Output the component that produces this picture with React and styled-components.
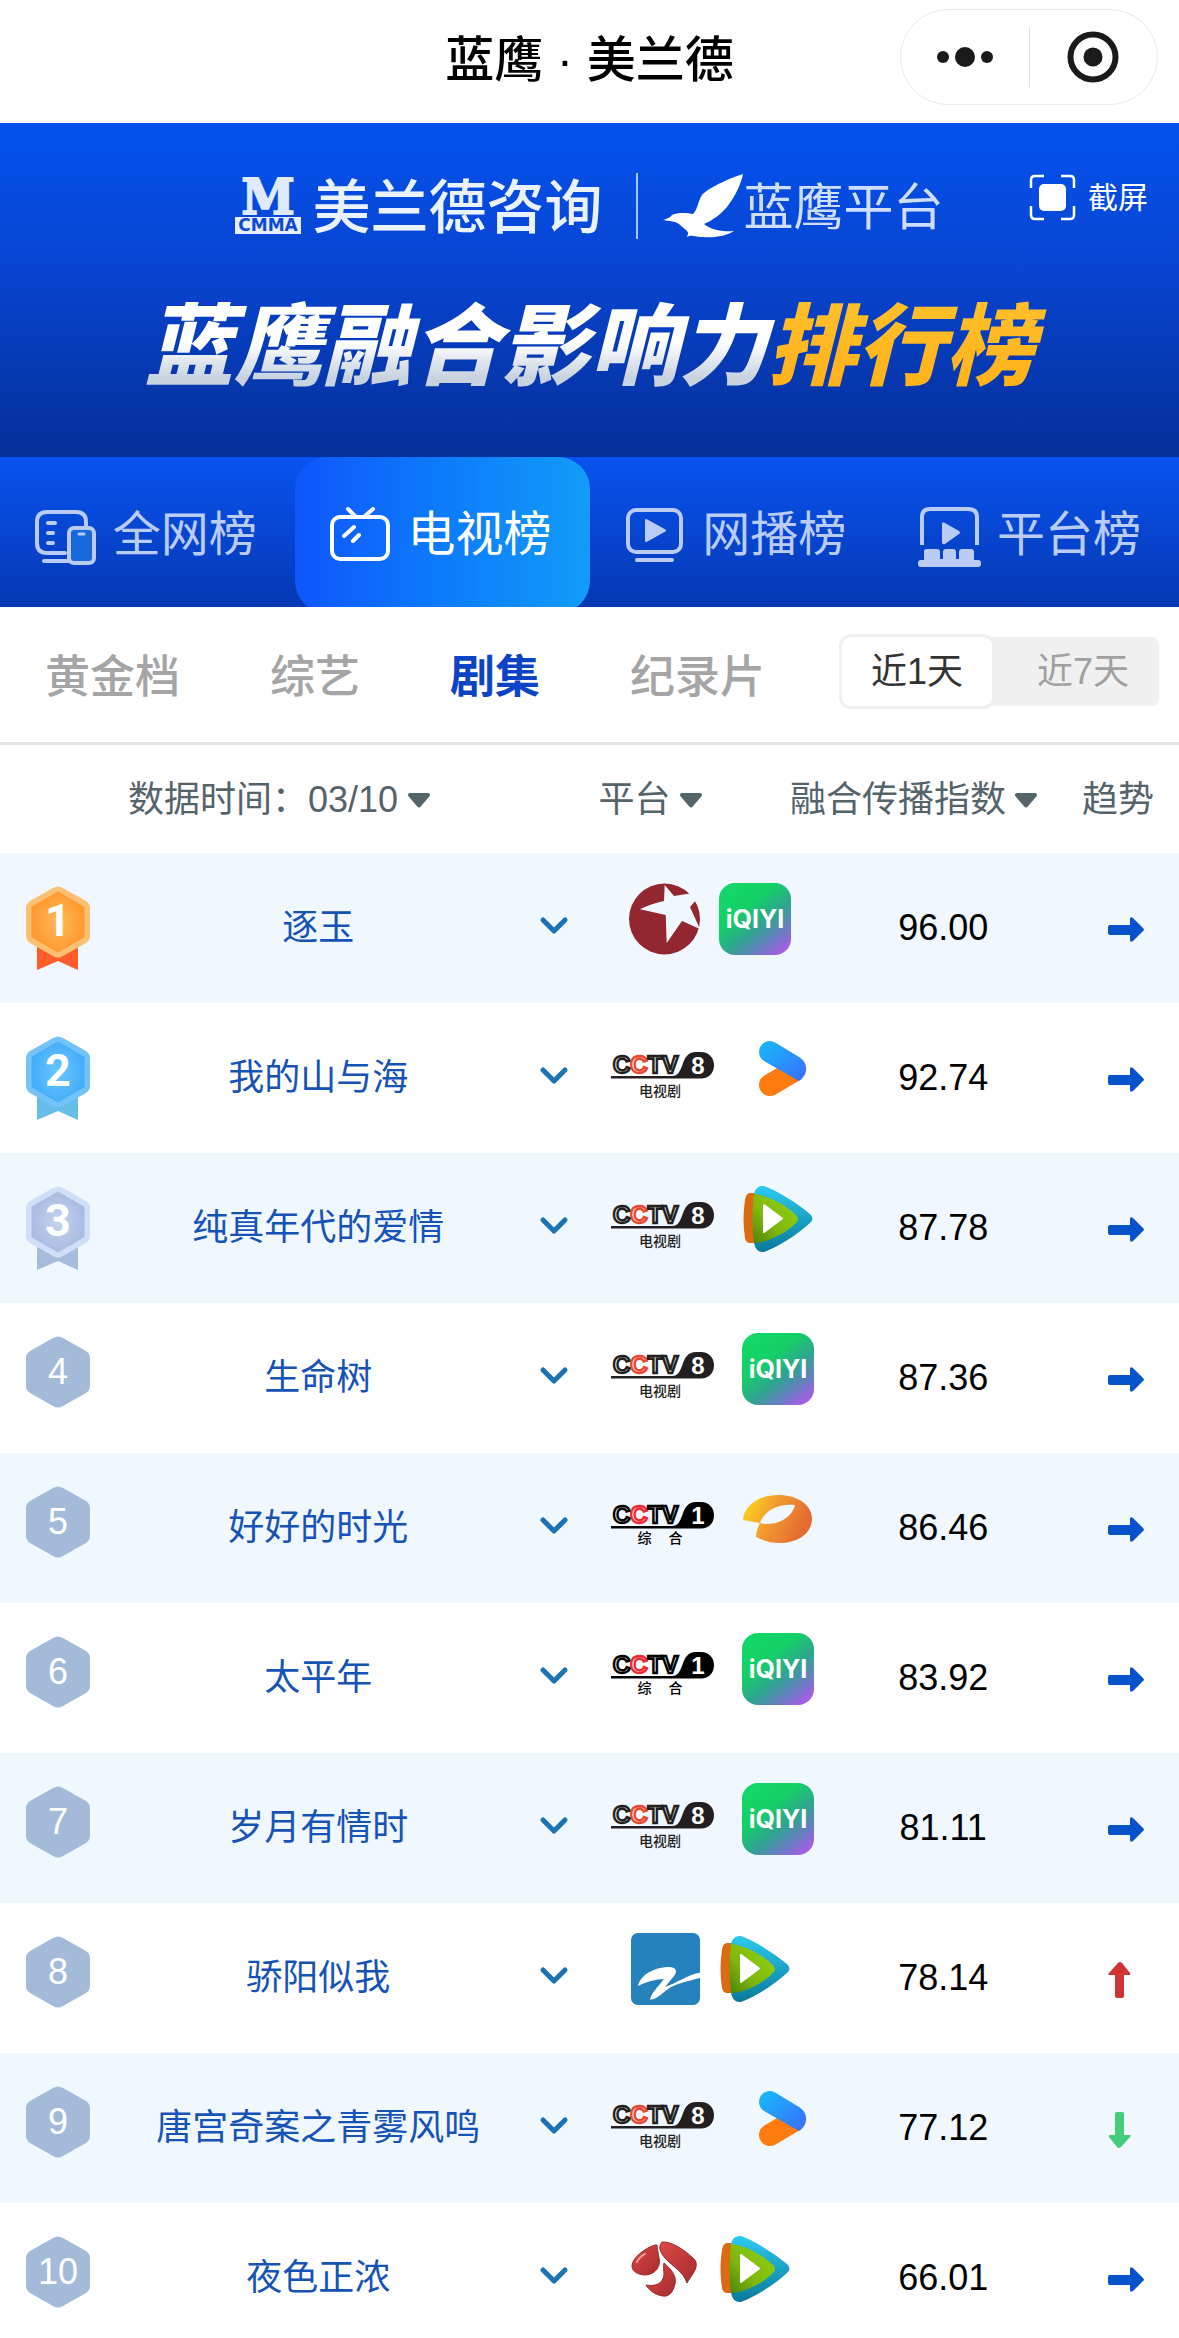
import React, {useState} from 'react';
import styled, {createGlobalStyle, css} from 'styled-components';

const GlobalStyle = createGlobalStyle`
    *{
        box-sizing:border-box;
    }
    body{
        margin:0;
        background-color:#fff;
        font-family:'Liberation Sans', 'Noto Sans CJK SC', sans-serif;
    }
    button, select{
        margin:0;
        padding:0;
        border:0;
        background:none;
        color:inherit;
        font:inherit;
        cursor:pointer;
    }
    svg{
        display:block;
        flex:none;
        overflow:visible;
    }
`;

const Page = styled.main`
    height:100vh;
    overflow-x:hidden;
    overflow-y:auto;
    scrollbar-width:none;
`;

const Header = styled.header`
    display:grid;
    grid-template-columns:1fr auto 1fr;
    align-items:center;
    padding:9px 21px 18px;
`;

const AppName = styled.h1`
    grid-column:2;
    margin:0;
    padding-top:6px;
    font-size:49px;
    line-height:64px;
    font-weight:500;
    color:#000;
`;

const Capsule = styled.div`
    justify-self:end;
    display:flex;
    align-items:center;
    width:258px;
    height:96px;
    border:1px solid #e9e9e9;
    border-radius:48px;
`;

const CapsuleButton = styled.button`
    flex:1;
    height:60px;
    display:flex;
    align-items:center;
    justify-content:center;
    & + &{
        border-left:1px solid #e2e2e2;
    }
`;

const Banner = styled.section`
    padding:48px 31px 60px;
    background:linear-gradient(#0552ef, #0744cf 45%, #052f98);
    color:#fff;
`;

const BrandRow = styled.div`
    display:grid;
    grid-template-columns:1fr auto 1fr;
`;

const Brands = styled.div`
    grid-column:2;
    height:70px;
    display:flex;
    align-items:center;
`;

const CompanyName = styled.span`
    margin-left:11px;
    padding-top:4px;
    font-size:58px;
    line-height:66px;
    font-weight:500;
    color:#eaf1ff;
`;

const BrandLine = styled.span`
    width:2px;
    height:66px;
    margin:0 25px 0 33px;
    background-color:#a9c2fa;
`;

const ProductName = styled.span`
    padding-top:4px;
    font-size:50px;
    line-height:66px;
    font-weight:400;
    color:#cfdefe;
`;

const ShotButton = styled.button`
    justify-self:end;
    align-self:start;
    display:flex;
    align-items:center;
    gap:13px;
    margin-top:4px;
    font-size:30px;
    line-height:45px;
`;

const BannerTitle = styled.h2`
    margin:56px 0 0;
    text-align:center;
    font-size:89px;
    line-height:100px;
    font-weight:900;
    font-style:italic;
    white-space:nowrap;
`;

const TitlePart = styled.span`
    padding:0 16px;
    margin:0 -16px;
    color:transparent;
    background:${props=>props.$gold
        ?'linear-gradient(#ffc02b, #ffb019)'
        :'linear-gradient(#fff 45%, #c9d3e0 80%)'};
    background-clip:text;
    -webkit-background-clip:text;
`;

const MainTabs = styled.nav`
    display:grid;
    grid-template-columns:repeat(4, 1fr);
    height:150px;
    overflow:hidden;
    background:linear-gradient(#0853f0, #0538b2);
`;

const MainTab = styled.button`
    height:156px;
    padding-bottom:6px;
    display:flex;
    align-items:center;
    justify-content:center;
    gap:17px;
    border-radius:32px;
    font-size:48px;
    line-height:60px;
    color:#b9cbf6;
    ${props=>props.$active&&css`
        color:#fff;
        background:linear-gradient(90deg, #0f56fb, #0d7bfb 50%, #129cf8);
    `}
`;

const TabLabel = styled.span`
    padding-top:6px;
    margin-right:2px;
`;

const SubBar = styled.div`
    display:flex;
    justify-content:space-between;
    align-items:center;
    height:138px;
    padding:0 20px 0 45px;
    border-bottom:3px solid #e3e3e3;
`;

const SubTabs = styled.div`
    display:flex;
    gap:90px;
    padding-top:6px;
`;

const SubTab = styled.button`
    font-size:45px;
    line-height:60px;
    font-weight:${props=>props.$active?700:500};
    color:${props=>props.$active?'#0b45c6':'#a5a5a5'};
`;

const RangeGroup = styled.div`
    display:flex;
    align-items:center;
    margin-bottom:6px;
    border-radius:12px;
    background:linear-gradient(#f0f0f0, #f0f0f0) center / 100% 69px no-repeat;
`;

const RangeButton = styled.button`
    width:164px;
    height:75px;
    padding-left:12px;
    border-radius:12px;
    font-size:36px;
    line-height:48px;
    color:#a0a0a0;
    ${props=>props.$active&&css`
        width:156px;
        padding-left:0;
        color:#333;
        background-color:#fff;
        border:3px solid #f0f0f0;
    `}
`;

const RankTable = styled.table`
    width:100%;
    table-layout:fixed;
    border-collapse:collapse;
    font-size:36px;
    line-height:48px;
`;

const HeadCell = styled.th`
    height:108px;
    padding:2px ${props=>props.$right||0}px 0 ${props=>props.$left||0}px;
    text-align:left;
    font-weight:400;
    white-space:nowrap;
    color:#55636b;
`;

const HeadItem = styled.div`
    display:flex;
    align-items:center;
    justify-content:${props=>props.$end?'flex-end':'flex-start'};
`;

const HeadSelect = styled.select`
    appearance:none;
    outline:none;
`;

const SortButton = styled.button`
    display:flex;
    align-items:center;
`;

const CaretIcon = styled.svg`
    margin-left:8px;
`;

const Row = styled.tr`
    height:150px;
    background-color:${props=>props.$striped?'#f0f7ff':'#fff'};
`;

const Cell = styled.td`
    padding:0;
    text-align:center;
    vertical-align:middle;
`;

const MedalCell = styled(Cell)`
    padding:33px 0 0 25px;
    vertical-align:top;
`;

const NameLink = styled.a`
    color:#1653b6;
    text-decoration:none;
    white-space:nowrap;
`;

const ExpandButton = styled.button`
    display:flex;
    align-items:center;
    justify-content:center;
    width:100%;
    height:60px;
    padding-bottom:4px;
`;

const PlatformList = styled.div`
    display:flex;
    justify-content:center;
    gap:18px;
    padding:0 0 18px 6px;
`;

const TrendCell = styled(Cell)`
    padding:4px 0 0 47px;
`;

/* ---- icons ---- */

const Caret = ()=>(
    <CaretIcon width="24" height="15" viewBox="0 0 24 15">
        <path d="M3 2H21L12 12.500Z" fill="#55636b" stroke="#55636b" strokeWidth="4" strokeLinejoin="round"/>
    </CaretIcon>
);

const Chevron = ()=>(
    <svg width="28" height="18" viewBox="0 0 28 18">
        <path d="M3 3L14 14L25 3" fill="none" stroke="#1a74b4" strokeWidth="5" strokeLinecap="round" strokeLinejoin="round"/>
    </svg>
);

const ScreenShotIcon = ()=>(
    <svg width="45" height="45" viewBox="0 0 45 45">
        <path d="M14 1H5Q1 1 1 5V13M31 1H40Q44 1 44 5V13M44 31V40Q44 44 40 44H31M14 44H5Q1 44 1 40V31" fill="none" stroke="#fff" strokeWidth="2.500"/>
        <rect x="9" y="9" width="27" height="27" rx="5" fill="#fff"/>
    </svg>
);

const CompanyMark = ()=>(
    <svg width="66" height="56" viewBox="0 0 66 56">
        <text x="33" y="36" textAnchor="middle" fontFamily="DejaVu Serif" fontWeight="700" fontSize="48" fill="#dfe9ff" stroke="#dfe9ff" strokeWidth="2">M</text>
        <rect y="39" width="66" height="17" fill="#e6eeff"/>
        <text x="33" y="53" textAnchor="middle" fontFamily="DejaVu Sans" fontWeight="700" fontSize="17" fill="#0a4ad6">CMMA</text>
    </svg>
);

const EagleMark = ()=>(
    <svg width="81" height="64" viewBox="0 0 81 64">
        <path d="M80 0C70 3 46 13 39 21C35 27 35 35 30 40C25 39 15 38 9 41C7 44 3 45 0 46C5 47 12 47 16 50C20 54 26 57 25 60L24 63C28 60 33 63 40 63C52 64 63 62 71 57C60 58 48 56 41 50C50 46 58 40 64 33C72 23 78 10 80 0Z" fill="#fff"/>
    </svg>
);

const AllNetIcon = ()=>(
    <svg width="60" height="66" viewBox="0 0 60 66" fill="none" stroke="currentColor" strokeWidth="4" strokeLinecap="round">
        <path d="M29 54H11Q1 54 1 44V23Q1 13 11 13H40Q50 13 50 23V27"/>
        <path d="M12 24H19M12 34H17M12 44H17M8 62H32"/>
        <rect x="33" y="29" width="25" height="35" rx="5" fill="#1768dc"/>
        <path d="M43 35H48" strokeWidth="3"/>
    </svg>
);

const TvIcon = ()=>(
    <svg width="60" height="66" viewBox="0 0 60 66" fill="none" stroke="currentColor" strokeWidth="4" strokeLinecap="round">
        <rect x="1" y="18" width="56" height="42" rx="8"/>
        <path d="M17 10L24 17M42 10L34 17M13 37L23 28M22 42L28 36"/>
    </svg>
);

const WebPlayIcon = ()=>(
    <svg width="60" height="66" viewBox="0 0 60 66" fill="none" stroke="currentColor" strokeWidth="4" strokeLinecap="round">
        <rect x="3" y="11" width="53" height="42" rx="8"/>
        <path d="M21 21V42L40 31.500Z" fill="currentColor" strokeWidth="2" strokeLinejoin="round"/>
        <path d="M12 61H47"/>
    </svg>
);

const PlatformIcon = ()=>(
    <svg width="60" height="66" viewBox="0 0 60 66" fill="currentColor">
        <path d="M2 46V18Q2 10 10 10H48Q57 10 57 18V46" fill="none" stroke="currentColor" strokeWidth="4"/>
        <path d="M22 25Q22 22 25 24L39 32Q41 34 39 35L25 45Q22 46 22 43Z"/>
        <path d="M4 62V52Q4 50 7 50H17Q20 50 20 53V60H23V53Q23 50 26 50H33Q36 50 36 53V60H39V53Q39 50 42 50H51Q54 50 54 53V62Z"/>
        <rect x="-2" y="61" width="63" height="7" rx="3"/>
    </svg>
);

/* ---- rank badges ---- */

const hexagon = "M28 2Q33 -1 38 2L61 15Q65 18 65 22V50Q65 54 61 57L38 70Q33 73 28 70L5 57Q1 54 1 50V22Q1 18 5 15Z";

const medals = {
    1:{edge:'#fcc072', from:'#ffb95c', to:'#ff9a2e', ribbon:'#ff5c29'},
    2:{edge:'#74c2fa', from:'#6bc6ff', to:'#45aef9', ribbon:'#66bde9'},
    3:{edge:'#cfdff8', from:'#c5d2ee', to:'#a9bde2', ribbon:'#a5bcdc'},
};

function Medal({rank}){
    const medal = medals[rank];
    if(!medal){
        return(
            <svg width="66" height="72" viewBox="0 0 66 72">
                <path d={hexagon} fill="#a3bbd9"/>
                <text x="33" y="48" textAnchor="middle" fontSize="36" fill="#fff">{rank}</text>
            </svg>
        );
    }
    return(
        <svg width="66" height="84" viewBox="0 0 66 84">
            <defs>
                <radialGradient id={"medal"+rank}>
                    <stop offset="0" stopColor={medal.from}/>
                    <stop offset="1" stopColor={medal.to}/>
                </radialGradient>
            </defs>
            <path d="M12 54H53V84L33 75L12 84Z" fill={medal.ribbon}/>
            <path d={hexagon} fill={medal.edge}/>
            <path d="M33 6L59 21V51L33 66L7 51V21Z" fill={"url(#medal"+rank+")"} stroke={medal.to} strokeWidth="1" strokeLinejoin="round"/>
            <text x="33" y="50" textAnchor="middle" fontFamily="Roboto" fontWeight="700" fontSize="45" fill="#fff">{rank}</text>
        </svg>
    );
}

/* ---- platform logos ---- */

const Iqiyi = ()=>(
    <svg width="72" height="72" viewBox="0 0 72 72" role="img" aria-label="爱奇艺">
        <defs>
            <linearGradient id="iqiyi" x1="0.2" y1="0" x2="1" y2="1">
                <stop offset="0" stopColor="#12d866"/>
                <stop offset="0.3" stopColor="#14cf66"/>
                <stop offset="0.55" stopColor="#2fa491"/>
                <stop offset="0.75" stopColor="#6a7cc4"/>
                <stop offset="1" stopColor="#c94bf4"/>
            </linearGradient>
        </defs>
        <rect width="72" height="72" rx="16" fill="url(#iqiyi)"/>
        <text x="36" y="45" textAnchor="middle" fontFamily="Inter" fontWeight="700" fontSize="25" fill="#fff">iQIYI</text>
    </svg>
);

const Dragon = ()=>(
    <svg width="72" height="72" viewBox="0 0 72 72" role="img" aria-label="东方卫视">
        <circle cx="35.500" cy="36" r="35.500" fill="#92272f"/>
        <path d="M35.700 2L45 13L61 10.500L67 17L61 24L71 46L53 38L37.700 60L36.700 32L11 26.300C19 22 27 20 35 18Z" fill="#f0f7ff"/>
    </svg>
);

// channel number and caption sit beside / under the shared CCTV mark
function Cctv({number, caption, color, red, captionGap, captionY}){
    return(
        <svg width="118" height="72" viewBox="0 0 118 72" role="img" aria-label={"CCTV-"+number}>
            <text x="7" y="40" fontSize="24" fontWeight="700" fill="#fff" strokeWidth="2.400">
                <tspan stroke={color}>C</tspan>
                <tspan stroke={red}>C</tspan>
                <tspan stroke={color}>TV</tspan>
            </text>
            <path d="M5 43H66C72 43 74 38 76 33C79 24 82 19 90 19H95C103 19 108 25 108 32C108 40 103 45.500 95 45.500H5Z" fill={color}/>
            <text x="92" y="41" textAnchor="middle" fontSize="24" fontWeight="700" fill="#fff">{number}</text>
            <text y={captionY} textAnchor="middle" fontSize="14" fontWeight="500" fill={color}>
                {caption.split('').map((ch, i)=>
                    <tspan key={ch} x={54+(i-(caption.length-1)/2)*captionGap}>{ch}</tspan>
                )}
            </text>
        </svg>
    );
}

const Cctv8 = ()=><Cctv number="8" caption="电视剧" color="#231f20" red="#e9482f" captionGap={14} captionY={63}/>;
const Cctv1 = ()=><Cctv number="1" caption="综合" color="#000" red="#f22a2f" captionGap={31} captionY={60}/>;

const Youku = ()=>(
    <svg width="72" height="72" viewBox="0 0 72 72" role="img" aria-label="优酷">
        <defs>
            <linearGradient id="youku" x1="0" y1="0" x2="1" y2="1">
                <stop offset="0" stopColor="#15bdfb"/>
                <stop offset="1" stopColor="#3a6cfb"/>
            </linearGradient>
        </defs>
        <path d="M28 52L50 39" fill="none" stroke="#ff7a0f" strokeWidth="22" strokeLinecap="round"/>
        <path d="M34 10L57 24C67 30 66 42 57 48L22 28C13 22 17 8 28 8Q31 8 34 10Z" fill="url(#youku)"/>
    </svg>
);

const Tencent = ()=>(
    <svg width="72" height="72" viewBox="0 0 72 72" role="img" aria-label="腾讯视频">
        <defs>
            <linearGradient id="txBlue" x1="0" y1="0" x2="0" y2="1">
                <stop offset="0" stopColor="#2ccaf0"/>
                <stop offset="1" stopColor="#087a9c"/>
            </linearGradient>
            <linearGradient id="txGreen" x1="1" y1="0" x2="0" y2="1">
                <stop offset="0" stopColor="#93d511"/>
                <stop offset="0.6" stopColor="#7fb80d"/>
                <stop offset="1" stopColor="#4a8409"/>
            </linearGradient>
        </defs>
        <path d="M14 10H8Q4 10 3 17C1 30 1 42 3 55Q4 60 8 60H14Z" fill="#dc6a12"/>
        <path d="M12 11Q14 2 22 3C34 7 55 20 68 31Q73 35.500 68 40C55 52 34 65 22 69Q14 70 12 60Z" fill="url(#txBlue)"/>
        <path d="M12 11C24 12 43 21 54 32Q58 36 54 40C43 51 24 60 12 60C10 44 10 28 12 11Z" fill="url(#txGreen)"/>
        <path d="M22 22L40 35.500L22 49Z" fill="#fff" stroke="#fff" strokeWidth="2" strokeLinejoin="round"/>
    </svg>
);

const Mango = ()=>(
    <svg width="72" height="72" viewBox="0 0 72 72" role="img" aria-label="芒果TV">
        <defs>
            <linearGradient id="mango" x1="0" y1="0.3" x2="0.9" y2="0.6">
                <stop offset="0" stopColor="#fbd51f"/>
                <stop offset="0.45" stopColor="#f29a2e"/>
                <stop offset="1" stopColor="#e56b33"/>
            </linearGradient>
        </defs>
        <path fillRule="evenodd" d="M1 37C2 22 18 12 36 12C56 12 70 22 70 36C70 50 56 60 38 60C28 60 20 57 14 54C14 49 16 44 18 40ZM18 40C22 28 36 20 53 22C50 35 34 44 18 40Z" fill="url(#mango)"/>
    </svg>
);

const Zhejiang = ()=>(
    <svg width="72" height="72" viewBox="0 0 72 72" role="img" aria-label="浙江卫视">
        <rect x="2" width="69" height="72" rx="7" fill="#2682bd"/>
        <path d="M9 53C11 43 24 34 40 34C47 34 49 38 45 43L36 54C48 50 58 42 71 39.500V45C56 49 50 50 42 54C34 59 28 67 21 66.500C22 60 30 53 35 46C27 46 17 49 9 53Z" fill="#fff"/>
    </svg>
);

const Jiangsu = ()=>(
    <svg width="72" height="72" viewBox="0 0 72 72" role="img" aria-label="江苏卫视">
        <defs>
            <linearGradient id="jsRed" x1="0" y1="0" x2="1" y2="1">
                <stop offset="0" stopColor="#dd4a45"/>
                <stop offset="1" stopColor="#a62a2d"/>
            </linearGradient>
        </defs>
        <g fill="url(#jsRed)" stroke="#9c2a2c" strokeWidth="1">
            <path d="M26 12C16 15 3 25 3 33C3 39 10 42 17 42C27 41 32 33 30 25C29 19 28 15 28 12Z"/>
            <path d="M33 9C42 8 56 17 65 26Q69 30 66 37C63 43 60 46 58 50C54 38 44 34 36 25C31 19 29 14 33 9Z"/>
            <path d="M35 30C42 36 48 43 46 51C44 59 40 64 34 63C26 62 20 57 17 52C27 54 34 50 35 42C35 37 34 34 35 30Z"/>
        </g>
        <path d="M8 29Q11 23 16 21" fill="none" stroke="#f39a92" strokeWidth="2" strokeLinecap="round"/>
    </svg>
);

const platformLogos = {
    iqiyi:Iqiyi, dragon:Dragon, cctv8:Cctv8, cctv1:Cctv1, youku:Youku,
    tencent:Tencent, mango:Mango, zhejiang:Zhejiang, jiangsu:Jiangsu,
};

const trendLabels = {same:'持平', up:'上升', down:'下降'};

function Trend({type}){
    if(type==='same'){
        return(
            <svg width="36" height="26" viewBox="0 0 36 26" role="img" aria-label={trendLabels[type]}>
                <path d="M2 8H22V2Q22 -1 25 1L35 11Q37 13 35 14L25 24Q22 26 22 23V18H2Q0 18 0 16V10Q0 8 2 8Z" fill="#0653cc"/>
            </svg>
        );
    }
    return(
        <svg width="24" height="36" viewBox="0 0 24 36" role="img" aria-label={trendLabels[type]}>
            <path
                d="M10 1Q12 -1 14 1L22 11Q23 13 21 13H16V34Q16 36 14 36H9Q7 36 7 34V13H2Q-1 13 1 11Z"
                fill={type==='up'?'#cf3332':'#43cc79'}
                transform={type==='up'?undefined:'rotate(180 11.5 18)'}
            />
        </svg>
    );
}

const mainTabs = [
    {key:'all', name:'全网榜', Icon:AllNetIcon},
    {key:'tv', name:'电视榜', Icon:TvIcon},
    {key:'web', name:'网播榜', Icon:WebPlayIcon},
    {key:'platform', name:'平台榜', Icon:PlatformIcon},
];

const subTabs = ['黄金档', '综艺', '剧集', '纪录片'];
const ranges = ['近1天', '近7天'];

const shows = [
    {name:'逐玉', platforms:['dragon', 'iqiyi'], score:'96.00', trend:'same'},
    {name:'我的山与海', platforms:['cctv8', 'youku'], score:'92.74', trend:'same'},
    {name:'纯真年代的爱情', platforms:['cctv8', 'tencent'], score:'87.78', trend:'same'},
    {name:'生命树', platforms:['cctv8', 'iqiyi'], score:'87.36', trend:'same'},
    {name:'好好的时光', platforms:['cctv1', 'mango'], score:'86.46', trend:'same'},
    {name:'太平年', platforms:['cctv1', 'iqiyi'], score:'83.92', trend:'same'},
    {name:'岁月有情时', platforms:['cctv8', 'iqiyi'], score:'81.11', trend:'same'},
    {name:'骄阳似我', platforms:['zhejiang', 'tencent'], score:'78.14', trend:'up'},
    {name:'唐宫奇案之青雾风鸣', platforms:['cctv8', 'youku'], score:'77.12', trend:'down'},
    {name:'夜色正浓', platforms:['jiangsu', 'tencent'], score:'66.01', trend:'same'},
];

function ShowRow({show, rank}){
    return(
        <Row $striped={rank%2===1}>
            <MedalCell><Medal rank={rank}/></MedalCell>
            <Cell><NameLink href="#">{show.name}</NameLink></Cell>
            <Cell><ExpandButton aria-label={"展开"+show.name}><Chevron/></ExpandButton></Cell>
            <Cell>
                <PlatformList>
                    {show.platforms.map(key=>{
                        const Logo=platformLogos[key];
                        return <Logo key={key}/>;
                    })}
                </PlatformList>
            </Cell>
            <Cell>{show.score}</Cell>
            <TrendCell><Trend type={show.trend}/></TrendCell>
        </Row>
    );
}

function App(){
    const [mainTab, setMainTab] = useState('tv');
    const [subTab, setSubTab] = useState('剧集');
    const [range, setRange] = useState('近1天');

    return(
        <Page>
            <GlobalStyle/>
            <Header>
                <AppName>蓝鹰 · 美兰德</AppName>
                <Capsule>
                    <CapsuleButton aria-label="更多">
                        <svg width="56" height="20" viewBox="0 0 56 20" fill="#1a1a1a">
                            <circle cx="6" cy="10" r="6"/>
                            <circle cx="28" cy="10" r="10"/>
                            <circle cx="50" cy="10" r="6"/>
                        </svg>
                    </CapsuleButton>
                    <CapsuleButton aria-label="关闭">
                        <svg width="52" height="52" viewBox="0 0 52 52">
                            <circle cx="26" cy="26" r="22.500" fill="none" stroke="#1a1a1a" strokeWidth="6"/>
                            <circle cx="26" cy="26" r="9.500" fill="#1a1a1a"/>
                        </svg>
                    </CapsuleButton>
                </Capsule>
            </Header>
            <Banner>
                <BrandRow>
                    <Brands>
                        <CompanyMark/>
                        <CompanyName>美兰德咨询</CompanyName>
                        <BrandLine/>
                        <EagleMark/>
                        <ProductName>蓝鹰平台</ProductName>
                    </Brands>
                    <ShotButton><ScreenShotIcon/>截屏</ShotButton>
                </BrandRow>
                <BannerTitle><TitlePart>蓝鹰融合影响力</TitlePart><TitlePart $gold>排行榜</TitlePart></BannerTitle>
            </Banner>
            <MainTabs>
                {mainTabs.map(({key, name, Icon})=>
                    <MainTab key={key} $active={mainTab===key} onClick={()=>setMainTab(key)}>
                        <Icon/>
                        <TabLabel>{name}</TabLabel>
                    </MainTab>
                )}
            </MainTabs>
            <SubBar>
                <SubTabs>
                    {subTabs.map(name=>
                        <SubTab key={name} $active={subTab===name} onClick={()=>setSubTab(name)}>{name}</SubTab>
                    )}
                </SubTabs>
                <RangeGroup>
                    {ranges.map(name=>
                        <RangeButton key={name} $active={range===name} onClick={()=>setRange(name)}>{name}</RangeButton>
                    )}
                </RangeGroup>
            </SubBar>
            <RankTable>
                <colgroup>
                    <col width="10%"/>
                    <col width="34%"/>
                    <col width="6%"/>
                    <col width="20%"/>
                    <col width="20%"/>
                    <col width="10%"/>
                </colgroup>
                <thead>
                    <tr>
                        <HeadCell colSpan={3} $left={128}>
                            <HeadItem>
                                <label htmlFor="date">数据时间：</label>
                                <HeadSelect id="date"><option>03/10</option></HeadSelect>
                                <Caret/>
                            </HeadItem>
                        </HeadCell>
                        <HeadCell $left={9}>
                            <HeadItem>
                                <HeadSelect aria-label="平台"><option>平台</option></HeadSelect>
                                <Caret/>
                            </HeadItem>
                        </HeadCell>
                        <HeadCell $right={23}>
                            <HeadItem $end>
                                <SortButton>融合传播指数<Caret/></SortButton>
                            </HeadItem>
                        </HeadCell>
                        <HeadCell $left={21}>趋势</HeadCell>
                    </tr>
                </thead>
                <tbody>
                    {shows.map((show, i)=><ShowRow key={show.name} show={show} rank={i+1}/>)}
                </tbody>
            </RankTable>
        </Page>
    );
}

export default App;
